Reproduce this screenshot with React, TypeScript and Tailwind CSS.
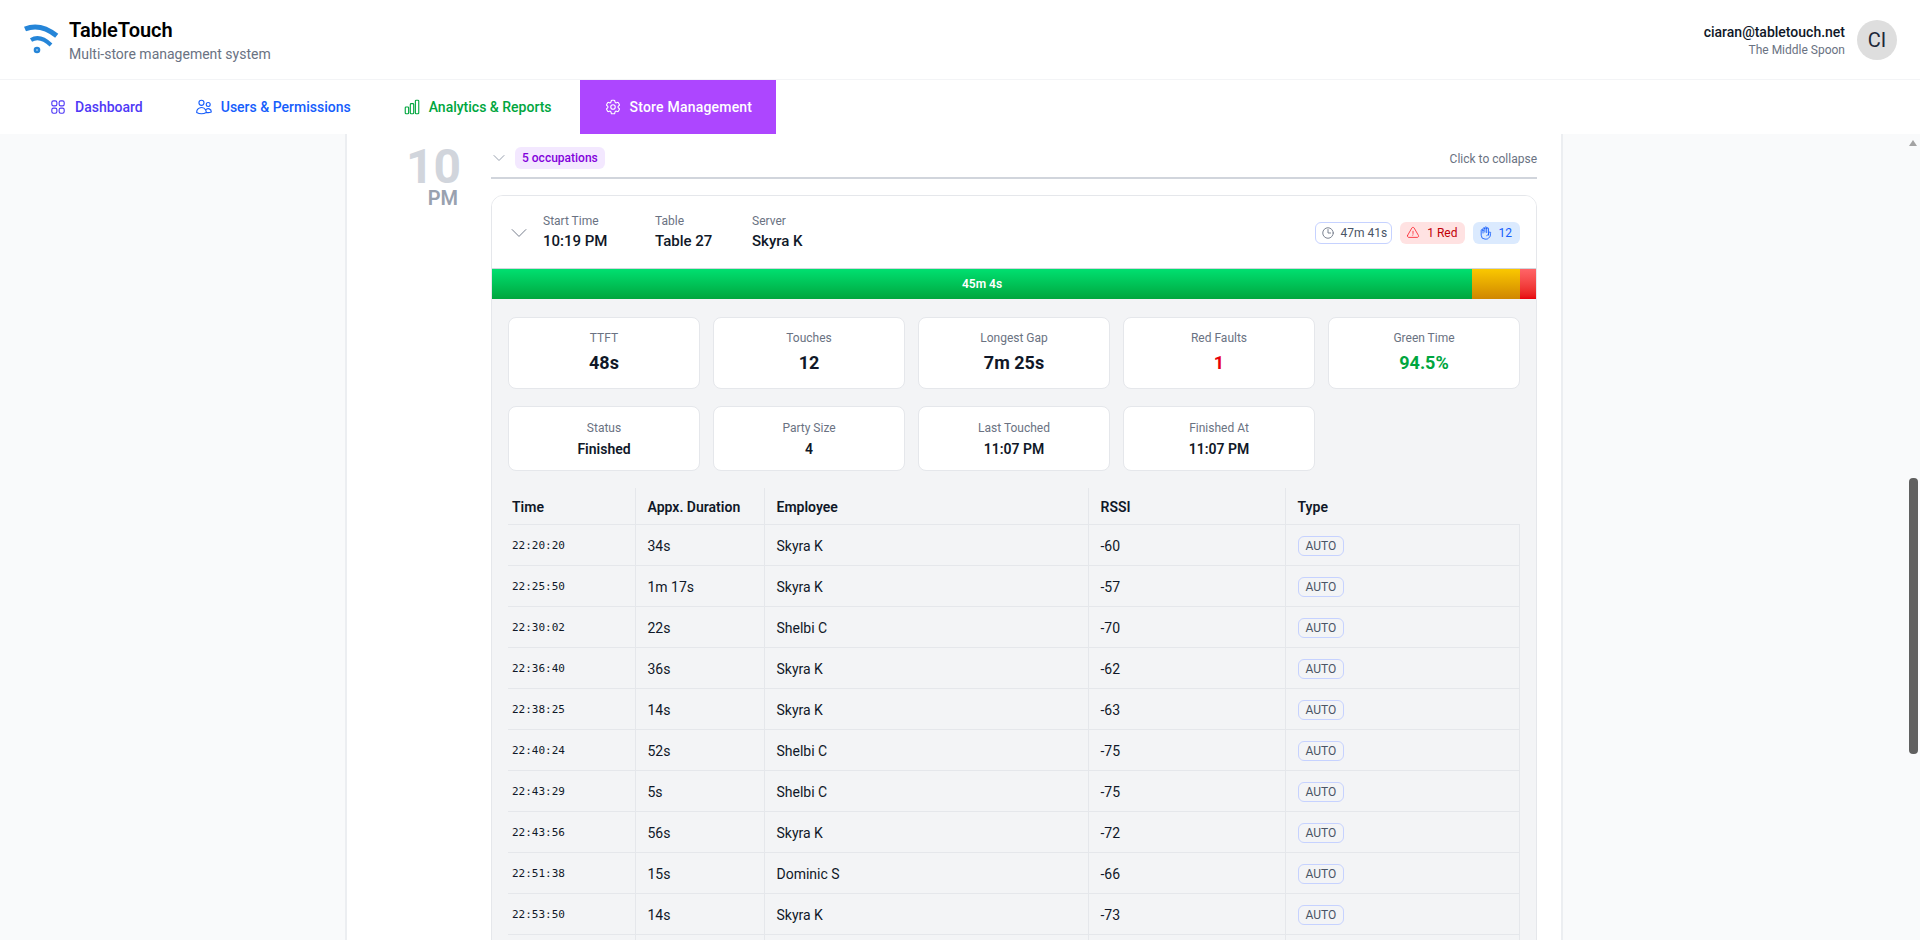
import {
  HiOutlineChartBar,
  HiOutlineChevronDown,
  HiOutlineClock,
  HiOutlineCog6Tooth,
  HiOutlineExclamationTriangle,
  HiOutlineHandRaised,
  HiOutlineSquares2X2,
  HiOutlineUsers,
} from "react-icons/hi2";

const stats = [
  { label: "TTFT", value: "48s", color: "text-gray-900" },
  { label: "Touches", value: "12", color: "text-gray-900" },
  { label: "Longest Gap", value: "7m 25s", color: "text-gray-900" },
  { label: "Red Faults", value: "1", color: "text-[#e7000b]" },
  { label: "Green Time", value: "94.5%", color: "text-[#00a63e]" },
];

const details = [
  { label: "Status", value: "Finished" },
  { label: "Party Size", value: "4" },
  { label: "Last Touched", value: "11:07 PM" },
  { label: "Finished At", value: "11:07 PM" },
];

const touches = [
  ["22:20:20", "34s", "Skyra K", "-60"],
  ["22:25:50", "1m 17s", "Skyra K", "-57"],
  ["22:30:02", "22s", "Shelbi C", "-70"],
  ["22:36:40", "36s", "Skyra K", "-62"],
  ["22:38:25", "14s", "Skyra K", "-63"],
  ["22:40:24", "52s", "Shelbi C", "-75"],
  ["22:43:29", "5s", "Shelbi C", "-75"],
  ["22:43:56", "56s", "Skyra K", "-72"],
  ["22:51:38", "15s", "Dominic S", "-66"],
  ["22:53:50", "14s", "Skyra K", "-73"],
];

const Logo = () => (
  <svg width="36" height="36" viewBox="0 0 36 36" fill="none" className="shrink-0">
    <path d="M1 7 Q 16.2 0.6 32.7 13.7" stroke="#2585d8" strokeWidth="5" />
    <path d="M7 18 Q 16 12.5 27 23" stroke="#2585d8" strokeWidth="4" />
    <circle cx="13" cy="28" r="3.3" fill="#2585d8" />
    <circle cx="13" cy="28" r="0.9" fill="#9cc8ee" />
  </svg>
);

const App = () => {
  return (
    <div className="h-screen flex flex-col overflow-hidden bg-white font-['Roboto',sans-serif] text-gray-900">
      <header className="h-20 shrink-0 border-b border-gray-100 flex items-center justify-between pl-6 pr-[23px]">
        <div className="flex items-center gap-[9px]">
          <Logo />
          <div>
            <h1 className="text-xl font-semibold leading-7 text-black">TableTouch</h1>
            <p className="text-sm leading-5 text-gray-500">Multi-store management system</p>
          </div>
        </div>
        <div className="flex items-center gap-3">
          <div className="text-right">
            <p className="text-sm font-medium leading-5">ciaran@tabletouch.net</p>
            <p className="text-xs leading-4 text-gray-500">The Middle Spoon</p>
          </div>
          <div className="w-10 h-10 rounded-full bg-[#dedede] flex items-center justify-center text-xl text-gray-800">
            CI
          </div>
        </div>
      </header>

      <nav className="h-[54px] shrink-0 flex gap-1 pl-[25px] text-sm font-medium">
        <a className="flex items-center gap-2 px-6 text-[#4f39f6]">
          <HiOutlineSquares2X2 size={18} />
          Dashboard
        </a>
        <a className="flex items-center gap-2 px-6 text-[#155dfc]">
          <HiOutlineUsers size={18} />
          Users &amp; Permissions
        </a>
        <a className="flex items-center gap-2 px-6 text-[#00a63e]">
          <HiOutlineChartBar size={18} />
          Analytics &amp; Reports
        </a>
        <a className="flex items-center gap-2 px-6 bg-[#ad46ff] text-white tracking-[0.2px]">
          <HiOutlineCog6Tooth size={18} />
          Store Management
        </a>
      </nav>

      <div className="flex-1 min-h-0 flex bg-gray-50 relative">
        <main className="flex-1 min-w-0 overflow-hidden">
          <div className="ml-[347px] w-[1214px] bg-white shadow-[0_0_0_2px_#eceef1] flex pl-[59px] pr-6 pt-2.5">
            <div className="w-[52px] shrink-0 text-right pt-[3px]">
              <div className="text-5xl font-bold leading-10 text-gray-300">10</div>
              <div className="-mt-px text-xl font-semibold leading-6 text-gray-400">PM</div>
            </div>
            <div className="ml-[33px] flex-1 min-w-0">
              <div className="h-[35px] border-b-2 border-gray-300 flex items-center justify-between pb-[5px]">
                <div className="flex items-center gap-2">
                  <HiOutlineChevronDown size={16} className="text-gray-400" />
                  <span className="h-[22px] px-[7px] rounded-md bg-purple-100 text-xs font-medium text-[#8200db] flex items-center">
                    5 occupations
                  </span>
                </div>
                <span className="mt-0.5 text-xs text-gray-500">Click to collapse</span>
              </div>

              <div className="mt-4 border border-gray-200 rounded-t-xl overflow-hidden">
                <div className="h-[73px] bg-white border-b border-gray-300 flex items-center px-4 pt-0.5">
                  <HiOutlineChevronDown size={22} className="text-gray-500 mr-[13px] [&_path]:[stroke-width:1]" />
                  <div className="w-[112px]">
                    <div className="text-xs leading-4 text-gray-500">Start Time</div>
                    <div className="text-[15px] leading-6 font-medium">10:19 PM</div>
                  </div>
                  <div className="w-[97px]">
                    <div className="text-xs leading-4 text-gray-500">Table</div>
                    <div className="text-[15px] leading-6 font-medium">Table 27</div>
                  </div>
                  <div>
                    <div className="text-xs leading-4 text-gray-500">Server</div>
                    <div className="text-[15px] leading-6 font-medium">Skyra K</div>
                  </div>
                  <div className="ml-auto flex items-center gap-2 text-xs">
                    <span className="h-[22px] pl-[5px] pr-1 rounded-md border border-[#c6d2ff] bg-white text-gray-600 flex items-center gap-1.5">
                      <HiOutlineClock size={14} className="text-gray-500" />
                      47m 41s
                    </span>
                    <span className="h-[22px] pl-1.5 pr-[7px] rounded-md bg-red-100 text-[#c10007] flex items-center gap-[7px]">
                      <HiOutlineExclamationTriangle size={14} className="text-[#fb2c36]" />
                      1 Red
                    </span>
                    <span className="h-[22px] pl-1.5 pr-2 rounded-md bg-blue-100 text-[#155dfc] flex items-center gap-1.5">
                      <HiOutlineHandRaised size={14} />
                      12
                    </span>
                  </div>
                </div>

                <div className="h-[30px] flex text-xs font-semibold text-white">
                  <div className="w-[980px] bg-gradient-to-b from-[#00e070] to-[#00a63e] flex items-center justify-center">
                    45m 4s
                  </div>
                  <div className="w-12 bg-gradient-to-b from-[#fac800] to-[#d08700]" />
                  <div className="flex-1 bg-gradient-to-b from-[#ff6467] to-[#e7000b]" />
                </div>

                <div className="bg-gray-100 px-4 pt-[18px]">
                  <div className="grid grid-cols-5 gap-[13px]">
                    {stats.map((s) => (
                      <div key={s.label} className="h-[72px] pt-3 bg-white border border-gray-200 rounded-lg flex flex-col items-center">
                        <div className="text-xs leading-4 text-gray-500">{s.label}</div>
                        <div className={`mt-[3px] text-lg leading-7 font-bold ${s.color}`}>{s.value}</div>
                      </div>
                    ))}
                  </div>
                  <div className="grid grid-cols-5 gap-[13px] mt-[17px]">
                    {details.map((d) => (
                      <div key={d.label} className="h-[65px] pt-[13px] bg-white border border-gray-200 rounded-lg flex flex-col items-center">
                        <div className="text-xs leading-4 text-gray-500">{d.label}</div>
                        <div className="mt-[3px] text-sm leading-5 font-semibold">{d.value}</div>
                      </div>
                    ))}
                  </div>

                  <table className="w-full mt-[17px] table-fixed border-collapse text-sm">
                    <thead>
                      <tr className="h-9 border-b border-gray-200">
                        <th className="w-[127px] border-r border-gray-200 px-1 pt-0.5 text-left font-semibold">Time</th>
                        <th className="w-[129px] border-r border-gray-200 px-3 pt-0.5 text-left font-semibold">Appx. Duration</th>
                        <th className="w-[324px] border-r border-gray-200 px-3 pt-0.5 text-left font-semibold">Employee</th>
                        <th className="w-[197px] border-r border-gray-200 px-3 pt-0.5 text-left font-semibold">RSSI</th>
                        <th className="px-3 pt-0.5 text-left font-semibold">Type</th>
                      </tr>
                    </thead>
                    <tbody>
                      {touches.map((row) => (
                        <tr key={row[0]} className="h-[41px] border-b border-gray-200">
                          <td className="border-r border-gray-200 px-1 pt-0.5 font-['DejaVu_Sans_Mono',monospace] text-[11px]">{row[0]}</td>
                          <td className="border-r border-gray-200 px-3 pt-0.5">{row[1]}</td>
                          <td className="border-r border-gray-200 px-3 pt-0.5">{row[2]}</td>
                          <td className="border-r border-gray-200 px-3 pt-0.5">{row[3]}</td>
                          <td className="border-r border-gray-200 px-3 pt-0.5">
                            <span className="inline-flex h-5 items-center px-[7px] rounded-md border border-[#c6d2ff] text-xs text-gray-600">AUTO</span>
                          </td>
                        </tr>
                      ))}
                      <tr className="h-[41px]">
                        <td className="border-r border-gray-200" />
                        <td className="border-r border-gray-200" />
                        <td className="border-r border-gray-200" />
                        <td className="border-r border-gray-200" />
                        <td className="border-r border-gray-200" />
                      </tr>
                    </tbody>
                  </table>
                </div>
              </div>
            </div>
          </div>
        </main>
        <div className="w-3 shrink-0 flex flex-col items-center pr-0.5 pt-[6px]">
          <div className="w-0 h-0 border-x-[4.5px] border-x-transparent border-b-[6px] border-b-[#a3a3a3]" />
          <div className="w-[9px] h-[276px] mt-[332px] rounded-sm bg-[#606060]" />
        </div>
      </div>
    </div>
  );
};

export default App;
